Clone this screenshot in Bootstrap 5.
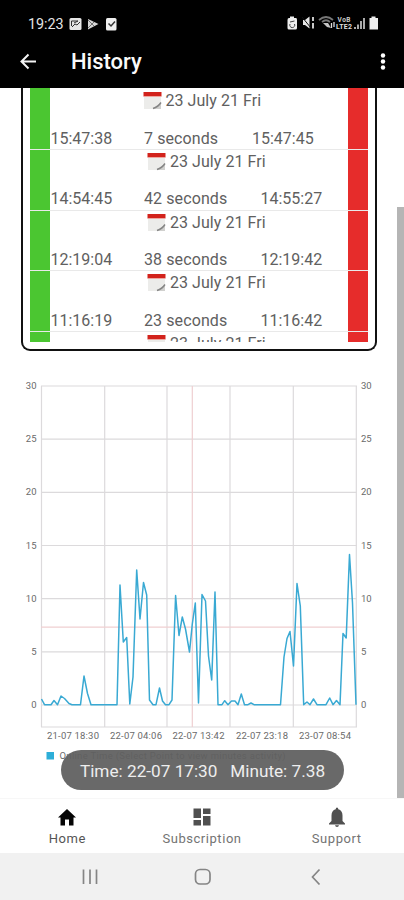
<!DOCTYPE html>
<html lang="en">
<head>
<meta charset="utf-8">
<meta name="viewport" content="width=device-width, initial-scale=1">
<title>History</title>
<link href="https://cdn.jsdelivr.net/npm/bootstrap@5.3.0/dist/css/bootstrap.min.css" rel="stylesheet">
<style>
body{font-family:Roboto,"Liberation Sans",sans-serif;height:900px;overflow:hidden;background:#fff}
svg{display:block;flex:none}
.status-bar{height:36px;padding:11px 24px 0 28px;font-size:14.3px;line-height:24px;color:#e4e4e4}
.app-bar{height:52px;padding:0 15px 0 19px}
.app-title{font-size:22px;font-weight:500;line-height:28px;margin-left:34px;color:#fafafa}
.main-area{height:710px}
.log-box{width:356px;height:263px;margin-left:21px;border:2.5px solid #111;border-top:0;border-radius:0 0 9px 9px;padding:0 7px 7px 6.5px}
.log-list{height:253.5px;padding-top:1px}
.log-row{height:60.8px;font-size:16px;line-height:20px;color:#606060;border-bottom:1.5px solid #e9e9e9}
.bar-in{width:20px;background:#4bc631}
.bar-out{width:20px;background:#e62c2b}
.log-first .bar-in,.log-first .bar-out{margin-top:-1px}
.log-body{padding:2px 0 0 1px}
.log-date{height:20px;gap:4px;margin-left:96.5px;letter-spacing:.05px}
.log-date.near{margin-left:92px}
.log-times{margin-top:17.500px;height:20px}
.t-start{width:93.5px}
.t-span{letter-spacing:.1px;width:116.5px}
.near-end .t-span{width:108px}
.chart{margin-top:20px}
.chart text{font-family:Roboto,"Liberation Sans",sans-serif;font-size:9.5px;fill:#6a6a6a}
.scroll-thumb{top:119px;right:0;width:7px;height:591px;background:#b5b5b5}
.toast-pill{left:61px;top:662px;width:283px;height:40px;background:rgba(96,96,96,.94);color:#eee;font-size:17.2px;line-height:42px;white-space:pre}
.tabs{height:55px;font-size:13px;line-height:16px;color:#737373;letter-spacing:.55px;border-top:1px solid #f7f7f7}
.tab-item{width:135px;padding-top:8px;gap:4px}
.tab-item.current{color:#555}
.sys-nav{height:47px;background:#f1f1f1}
</style>
</head>
<body class="d-flex flex-column">
<svg width="0" height="0" class="position-absolute" aria-hidden="true">
  <symbol id="cal" viewBox="0 0 19 19"><path d="M1 5H18V14L14 18H1Z" fill="#ececea"/><path d="M.5 1H18.500V5.500H.5Z" fill="#d2231c"/><path d="M1 5.500H18" stroke="#f6b6b0" stroke-width=".7"/><path d="M18 11.500V18H10Z" fill="#d0d0ce"/><path d="M10 17.500Q15 16 18 11.500" stroke="#858585" stroke-width="1.500" fill="none"/></symbol>
</svg>
<header class="bg-black text-white flex-shrink-0">
  <div class="status-bar d-flex justify-content-between">
    <div class="d-flex align-items-center">
      <span>19:23</span>
      <svg width="50" height="14" viewBox="0 0 50 14" style="margin-left:5px">
        <rect x=".5" y="1" width="12" height="12" rx="1.500" fill="#e6e6e6"/><path d="M2.500 9V4H9L5 6M3 10L6 7L8 8L11 5" stroke="#333" fill="none"/>
        <path d="M19 2L29.500 7L19 12.500Z" fill="#d5d5d5"/><path d="M19 3L25 9M19 11L25 5" stroke="#555" stroke-width=".8"/>
        <rect x="37" y="1" width="10.500" height="12.500" rx="1.500" fill="#eee"/><path d="M39.500 6.500L42 9L46 4.500" stroke="#333" stroke-width="1.500" fill="none"/>
      </svg>
    </div>
    <svg width="94" height="16" viewBox="286 15 94 16" style="margin-top:4px">
      <path d="M290 16.500H294V18H296Q297 18 297 20V28Q297 29.500 295.500 29.500H289Q287.500 29.500 287.500 28V20Q287.500 18 289 18H290Z" fill="#eee"/>
      <path d="M290 22L294.500 21M294.500 24A2.500 2.500 0 1 1 290 24" stroke="#444" fill="none"/>
      <path d="M303 20H305L309.500 16.500V28.500L305 25H303Z" fill="#e7e7e7"/><path d="M302 17L311 28" stroke="#111"/><path d="M313 17V21M313 23V28.500" stroke="#ddd" stroke-width="1.800" fill="none"/>
      <path d="M319 20Q326 14 333 20M322 22Q326 18.500 330 22" stroke="#777" stroke-width="1.700" fill="none"/><path d="M323 23H328L331 28L327 27Z" fill="#c5c5c5"/><path d="M331.500 23V28M334 27V22" stroke="#ddd" stroke-width="1.300"/>
      <text x="337.500" y="22" font-size="6.500" font-weight="700" textLength="13" fill="#ccc">VoB</text>
      <text x="336" y="29.200" font-size="7" font-weight="700" textLength="16" fill="#ddd">LTE2</text>
      <path d="M355 29V27M358 29V24.500" stroke="#aaa" stroke-width="2"/><path d="M361 29V21M364 29V18" stroke="#aaa" stroke-width="2"/>
      <path d="M371.500 16.500H375.500V18H378V29.500H369.500V18H371.500Z" fill="#eee"/>
    </svg>
  </div>
  <div class="app-bar d-flex align-items-center justify-content-between">
    <div class="d-flex align-items-center">
      <svg width="18" height="18" viewBox="0 0 18 18" fill="none" stroke="#f4f4f4" stroke-width="2"><path d="M17 8.500H2.500M9.500 1.500L2.500 8.500L9.500 15.500"/></svg>
      <h1 class="app-title mb-0">History</h1>
    </div>
    <svg width="12" height="18" viewBox="0 0 12 18" fill="#fff"><circle cx="6" cy="2.500" r="2.200"/><circle cx="6" cy="8.500" r="2.200"/><circle cx="6" cy="14.500" r="2.200"/></svg>
  </div>
</header>

<main class="main-area position-relative overflow-hidden flex-shrink-0">
  <section class="log-box">
    <div class="log-list overflow-hidden">
      <div class="log-row log-first d-flex near-end"><div class="bar-in"></div><div class="log-body flex-grow-1"><div class="log-date near d-flex"><svg width="19" height="19"><use href="#cal"/></svg><span>23 July 21 Fri</span></div><div class="log-times d-flex"><span class="t-start">15:47:38</span><span class="t-span">7 seconds</span><span>15:47:45</span></div></div><div class="bar-out"></div></div>
      <div class="log-row d-flex"><div class="bar-in"></div><div class="log-body flex-grow-1"><div class="log-date d-flex"><svg width="19" height="19"><use href="#cal"/></svg><span>23 July 21 Fri</span></div><div class="log-times d-flex"><span class="t-start">14:54:45</span><span class="t-span">42 seconds</span><span>14:55:27</span></div></div><div class="bar-out"></div></div>
      <div class="log-row d-flex"><div class="bar-in"></div><div class="log-body flex-grow-1"><div class="log-date d-flex"><svg width="19" height="19"><use href="#cal"/></svg><span>23 July 21 Fri</span></div><div class="log-times d-flex"><span class="t-start">12:19:04</span><span class="t-span">38 seconds</span><span>12:19:42</span></div></div><div class="bar-out"></div></div>
      <div class="log-row d-flex"><div class="bar-in"></div><div class="log-body flex-grow-1"><div class="log-date d-flex"><svg width="19" height="19"><use href="#cal"/></svg><span>23 July 21 Fri</span></div><div class="log-times d-flex"><span class="t-start">11:16:19</span><span class="t-span">23 seconds</span><span>11:16:42</span></div></div><div class="bar-out"></div></div>
      <div class="log-row d-flex"><div class="bar-in"></div><div class="log-body flex-grow-1"><div class="log-date d-flex"><svg width="19" height="19"><use href="#cal"/></svg><span>23 July 21 Fri</span></div></div><div class="bar-out"></div></div>
    </div>
  </section>

  <svg class="chart" width="390" height="400" viewBox="0 371 390 400">
    <g stroke="#dcdadc" stroke-width="1.200" fill="none">
      <path d="M41.500 386V727M104.700 386V727M167 386V727M230 386V727M293.300 386V727M356.300 386V727M41 727H357"/>
      <path d="M41 386H357M41 439.200H357M41 492.300H357M41 545.500H357M41 598.700H357M41 651.800H357M41 705H357"/>
    </g>
    <path d="M192.300 386V727M41 627.200H357" stroke="#efcfd1" stroke-width="1.200"/>
    <polyline fill="none" stroke="#39a9d3" stroke-width="1.500" stroke-linejoin="round" points="41.500,699 44.500,704.700 51,704.700 54,700.500 57.500,704.700 61,696 64.500,698.500 69,703.500 72,704.700 80.500,704.700 84,676 87.500,693.500 91,704.700 117,704.700 120,585 123.300,642 126.700,637.500 129.800,704 133,677 136.700,570 140,619 143.500,582.500 146.700,595 149.500,700 153,704.700 156,704.700 159.500,688 162.500,701 165.500,704.700 169,704.700 172,700 175.600,595.500 179,635.500 182.300,617 185.500,629 189.500,652 192.300,624 195.300,603 198.500,703 202,594.500 205.500,601 208.500,656 211.700,680 215,592 218,704.700 222,704.700 224.700,700.700 228,704.700 231.500,701 235,701 238,704.700 241.300,694 244.500,704.700 248,704.700 251,703 254,704.700 280.500,704.700 284,657 287,638.500 290,631.500 293.500,666 297,583.500 300.300,606 303.700,704.700 307,702 310,704.700 313.500,699 317,704.700 326,704.700 329.700,698 333,704.700 336.500,700.500 340,704.700 343,633.500 346.200,638 349.500,554.500 352.500,603 356,704.700"/>
    <g text-anchor="end">
      <text x="36.500" y="389">30</text><text x="36.500" y="442">25</text><text x="36.500" y="495.200">20</text><text x="36.500" y="548.500">15</text><text x="36.500" y="601.500">10</text><text x="36.500" y="654.700">5</text><text x="36.500" y="708">0</text>
    </g>
    <g>
      <text x="361" y="389">30</text><text x="361" y="442">25</text><text x="361" y="495.200">20</text><text x="361" y="548.500">15</text><text x="361" y="601.500">10</text><text x="361" y="654.700">5</text><text x="361" y="708">0</text>
    </g>
    <g>
      <text x="47" y="739" textLength="52">21-07 18:30</text><text x="110" y="739" textLength="52">22-07 04:06</text><text x="172.500" y="739" textLength="52">22-07 13:42</text><text x="236" y="739" textLength="52">22-07 23:18</text><text x="299" y="739" textLength="52">23-07 08:54</text>
    </g>
    <rect x="46.500" y="752" width="7.500" height="7.500" fill="#2daed8"/>
    <text x="59.500" y="759" textLength="226">Online Time (Select Point to view minutes activity)</text>
  </svg>

  <div class="scroll-thumb position-absolute"></div>
  <div class="toast-pill position-absolute rounded-pill text-center">Time: 22-07 17:30   Minute: 7.38</div>
</main>

<nav class="tabs d-flex bg-white flex-shrink-0">
  <div class="tab-item current d-flex flex-column align-items-center">
    <svg width="20" height="20" viewBox="0 0 20 20"><path d="M10 2L19 10.500H16.500V18.500H12V12.500H8V18.500H3.500V10.500H1Z" fill="#050505"/></svg><span>Home</span>
  </div>
  <div class="tab-item d-flex flex-column align-items-center">
    <svg width="20" height="20" viewBox="0 0 20 20" fill="#505050"><path d="M1.500 1.500H9V11H1.500ZM11 1.500H18.500V7H11ZM1.500 13H9V18.500H1.500ZM11 9H18.500V18.500H11Z"/></svg><span>Subscription</span>
  </div>
  <div class="tab-item d-flex flex-column align-items-center">
    <svg width="20" height="20" viewBox="0 0 20 20" fill="#505050"><path d="M10 .5Q11.300 .5 11.300 2.200Q15.500 3.400 15.500 8.500V14L18 16.500V17.500H2V16.500L4.500 14V8.500Q4.500 3.400 8.700 2.200Q8.700 .5 10 .5ZM8 18.300H12Q11.700 20 10 20T8 18.300"/></svg><span>Support</span>
  </div>
</nav>
<footer class="sys-nav d-flex align-items-center flex-shrink-0">
  <svg width="404" height="47" viewBox="0 853 404 47" fill="none" stroke="#858585" stroke-width="1.700"><path d="M83.500 869.500V884M90 869.500V884M96.500 869.500V884"/><rect x="195.500" y="869.500" width="14.500" height="14.500" rx="4.500"/><path d="M319.500 869.500L312.500 877L319.500 884.500"/></svg>
</footer>
<script src="https://cdn.jsdelivr.net/npm/bootstrap@5.3.0/dist/js/bootstrap.bundle.min.js"></script>
</body>
</html>
